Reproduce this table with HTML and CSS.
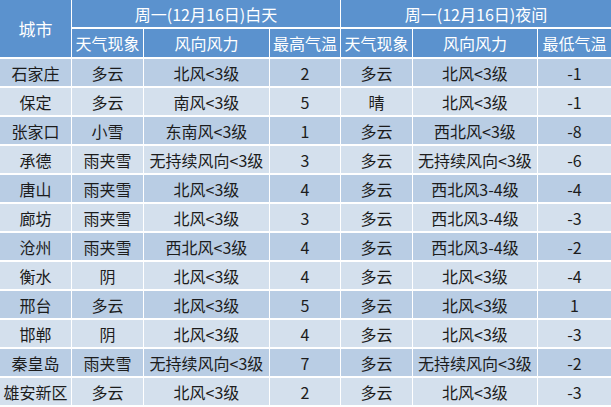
FILE: index.html
```html
<!DOCTYPE html>
<html lang="zh">
<head>
<meta charset="utf-8">
<title>河北天气</title>
<link rel="stylesheet" href="styles.css">
</head>
<body>
<div class="table">
  <div class="cell head city">城市</div>
  <div class="cell head span3">周一(12月16日)白天</div>
  <div class="cell head span3">周一(12月16日)夜间</div>
  <div class="cell head">天气现象</div>
  <div class="cell head">风向风力</div>
  <div class="cell head">最高气温</div>
  <div class="cell head">天气现象</div>
  <div class="cell head">风向风力</div>
  <div class="cell head">最低气温</div>

  <div class="cell d">石家庄</div><div class="cell d">多云</div><div class="cell d">北风&lt;3级</div><div class="cell d">2</div><div class="cell d">多云</div><div class="cell d">北风&lt;3级</div><div class="cell d">-1</div>
  <div class="cell l">保定</div><div class="cell l">多云</div><div class="cell l">南风&lt;3级</div><div class="cell l">5</div><div class="cell l">晴</div><div class="cell l">北风&lt;3级</div><div class="cell l">-1</div>
  <div class="cell d">张家口</div><div class="cell d">小雪</div><div class="cell d">东南风&lt;3级</div><div class="cell d">1</div><div class="cell d">多云</div><div class="cell d">西北风&lt;3级</div><div class="cell d">-8</div>
  <div class="cell l">承德</div><div class="cell l">雨夹雪</div><div class="cell l">无持续风向&lt;3级</div><div class="cell l">3</div><div class="cell l">多云</div><div class="cell l">无持续风向&lt;3级</div><div class="cell l">-6</div>
  <div class="cell d">唐山</div><div class="cell d">雨夹雪</div><div class="cell d">北风&lt;3级</div><div class="cell d">4</div><div class="cell d">多云</div><div class="cell d">西北风3-4级</div><div class="cell d">-4</div>
  <div class="cell l">廊坊</div><div class="cell l">雨夹雪</div><div class="cell l">北风&lt;3级</div><div class="cell l">3</div><div class="cell l">多云</div><div class="cell l">西北风3-4级</div><div class="cell l">-3</div>
  <div class="cell d">沧州</div><div class="cell d">雨夹雪</div><div class="cell d">西北风&lt;3级</div><div class="cell d">4</div><div class="cell d">多云</div><div class="cell d">西北风3-4级</div><div class="cell d">-2</div>
  <div class="cell l">衡水</div><div class="cell l">阴</div><div class="cell l">北风&lt;3级</div><div class="cell l">4</div><div class="cell l">多云</div><div class="cell l">北风&lt;3级</div><div class="cell l">-4</div>
  <div class="cell d">邢台</div><div class="cell d">多云</div><div class="cell d">北风&lt;3级</div><div class="cell d">5</div><div class="cell d">多云</div><div class="cell d">北风&lt;3级</div><div class="cell d">1</div>
  <div class="cell l">邯郸</div><div class="cell l">阴</div><div class="cell l">北风&lt;3级</div><div class="cell l">4</div><div class="cell l">多云</div><div class="cell l">北风&lt;3级</div><div class="cell l">-3</div>
  <div class="cell d">秦皇岛</div><div class="cell d">雨夹雪</div><div class="cell d">无持续风向&lt;3级</div><div class="cell d">7</div><div class="cell d">多云</div><div class="cell d">无持续风向&lt;3级</div><div class="cell d">-2</div>
  <div class="cell l">雄安新区</div><div class="cell l">多云</div><div class="cell l">北风&lt;3级</div><div class="cell l">2</div><div class="cell l">多云</div><div class="cell l">北风&lt;3级</div><div class="cell l">-3</div>
</div>
</body>
</html>
```
FILE: styles.css
```css
html, body {
  margin: 0;
  padding: 0;
  background: #ffffff;
}
.table {
  width: 611px;
  height: 407px;
  display: grid;
  grid-template-columns: 71px 71px 125px 70px 71px 124px 73px;
  grid-template-rows: 27px 28px repeat(12, 27px);
  column-gap: 1px;
  row-gap: 2px;
  background: #ffffff;
  font-family: "Noto Sans CJK SC", "Microsoft YaHei", sans-serif;
  font-size: 16px;
  color: #1c1c1c;
}
.cell {
  display: flex;
  align-items: center;
  justify-content: center;
  white-space: nowrap;
  line-height: 1;
}
.head {
  background: #5b92ce;
  color: #ffffff;
}
.city {
  grid-row: span 2;
  font-size: 17px;
}
.span3 {
  grid-column: span 3;
}
.d {
  background: #b9cde4;
}
.l {
  background: #d4e0ed;
}
```
